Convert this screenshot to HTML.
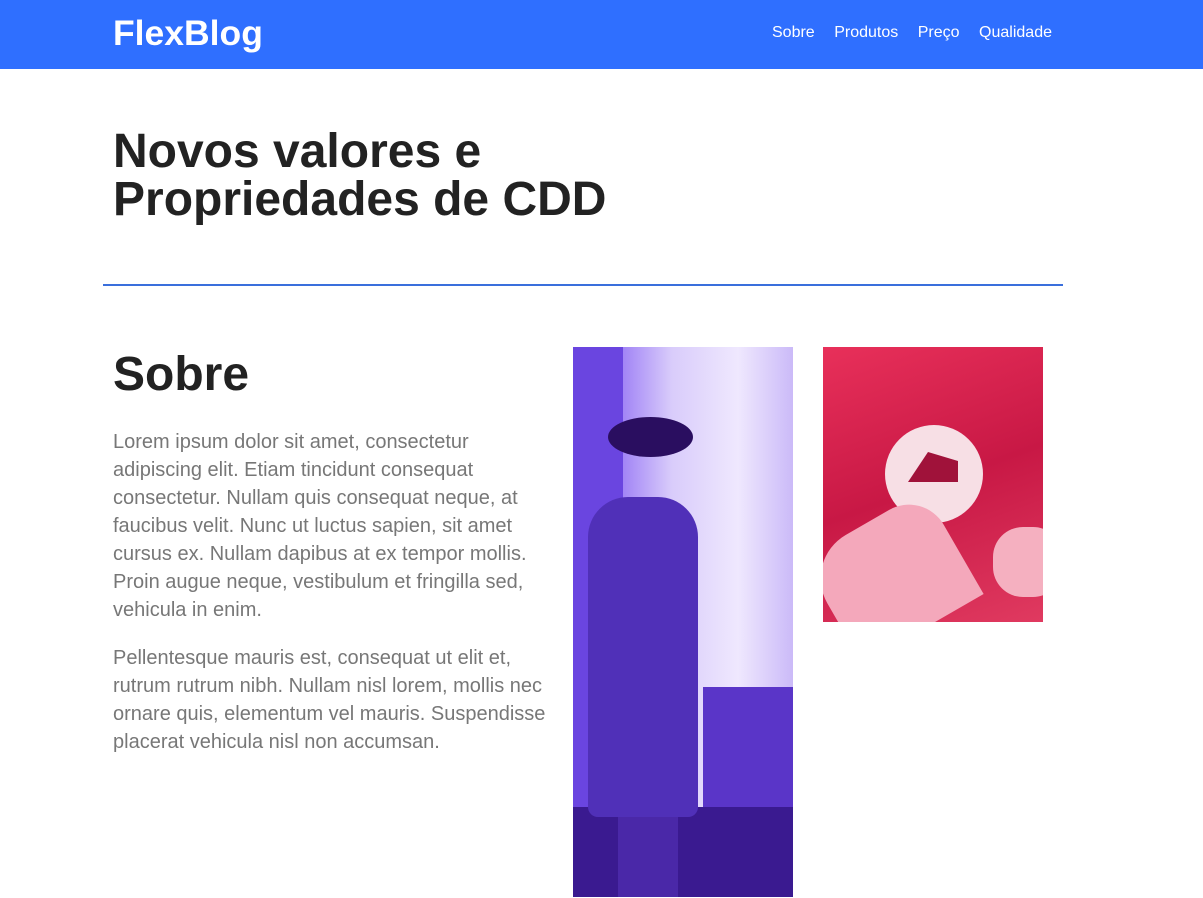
<!DOCTYPE html>
<html><head><meta charset="utf-8"><style>
*{margin:0;padding:0;box-sizing:border-box}
body{width:1203px;height:898px;overflow:hidden;background:#fff;font-family:"Liberation Sans",Arial,sans-serif;position:relative}
header{position:absolute;left:0;top:0;width:1203px;height:69px;background:#2f6fff}
.logo{position:absolute;left:113px;top:12px;color:#fff;font-weight:bold;font-size:35.5px;line-height:42px}
nav{position:absolute;right:151px;top:23px;color:#fff;font-size:16px;line-height:20px}
nav span{margin-left:19.5px}
h1{position:absolute;left:113px;top:128px;font-size:48px;line-height:48px;color:#222;font-weight:bold}
.hr{position:absolute;left:103px;top:284px;width:960px;height:2px;background:#3a6fdc}
h2{position:absolute;left:113px;top:348px;font-size:48px;line-height:54px;color:#222;font-weight:bold}
.txt{position:absolute;left:113px;top:428px;width:460px;font-size:20px;line-height:28px;color:#777;white-space:nowrap}
.txt p{margin-bottom:20px}
.img1{position:absolute;left:573px;top:347px;width:220px;height:550px;overflow:hidden;
background:linear-gradient(90deg,#7a55f0 0%,#9b7cf5 20%,#d9ccfb 45%,#efe8fe 75%,#cbbaf8 100%)}
.img2{position:absolute;left:823px;top:347px;width:220px;height:275px;overflow:hidden;
background:linear-gradient(160deg,#e8305a,#c81845 50%,#e03a60)}
</style></head><body>
<header><div class="logo">FlexBlog</div>
<nav><span>Sobre</span><span>Produtos</span><span>Preço</span><span>Qualidade</span></nav></header>
<h1>Novos valores e<br>Propriedades de CDD</h1>
<div class="hr"></div>
<h2>Sobre</h2>
<div class="txt"><p>Lorem ipsum dolor sit amet, consectetur<br>adipiscing elit. Etiam tincidunt consequat<br>consectetur. Nullam quis consequat neque, at<br>faucibus velit. Nunc ut luctus sapien, sit amet<br>cursus ex. Nullam dapibus at ex tempor mollis.<br>Proin augue neque, vestibulum et fringilla sed,<br>vehicula in enim.</p>
<p>Pellentesque mauris est, consequat ut elit et,<br>rutrum rutrum nibh. Nullam nisl lorem, mollis nec<br>ornare quis, elementum vel mauris. Suspendisse<br>placerat vehicula nisl non accumsan.</p></div>
<div class="img1">
<div style="position:absolute;left:0;top:0;width:50px;height:550px;background:#6a45e0"></div>
<div style="position:absolute;left:130px;top:340px;width:90px;height:210px;background:#5a35c8"></div>
<div style="position:absolute;left:0;top:460px;width:220px;height:90px;background:#3a1a90"></div>
<div style="position:absolute;left:35px;top:70px;width:85px;height:40px;border-radius:50%;background:#2a0e60"></div>
<div style="position:absolute;left:15px;top:150px;width:110px;height:320px;border-radius:40px 40px 10px 10px;background:#5030b8"></div>
<div style="position:absolute;left:45px;top:470px;width:60px;height:80px;background:#4a28a8"></div>
</div>
<div class="img2">
<div style="position:absolute;left:62px;top:78px;width:98px;height:98px;border-radius:50%;background:#f7dfe5"></div>
<div style="position:absolute;left:85px;top:105px;width:50px;height:30px;background:#a0123a;clip-path:polygon(0 100%,40% 0,100% 30%,100% 100%)"></div>
<div style="position:absolute;left:0;top:170px;width:140px;height:120px;border-radius:50px 40px 0 0;background:#f4a8bb;transform:rotate(-30deg)"></div>
<div style="position:absolute;left:170px;top:180px;width:70px;height:70px;border-radius:30px;background:#f5b0c0"></div>
</div>
</body></html>
